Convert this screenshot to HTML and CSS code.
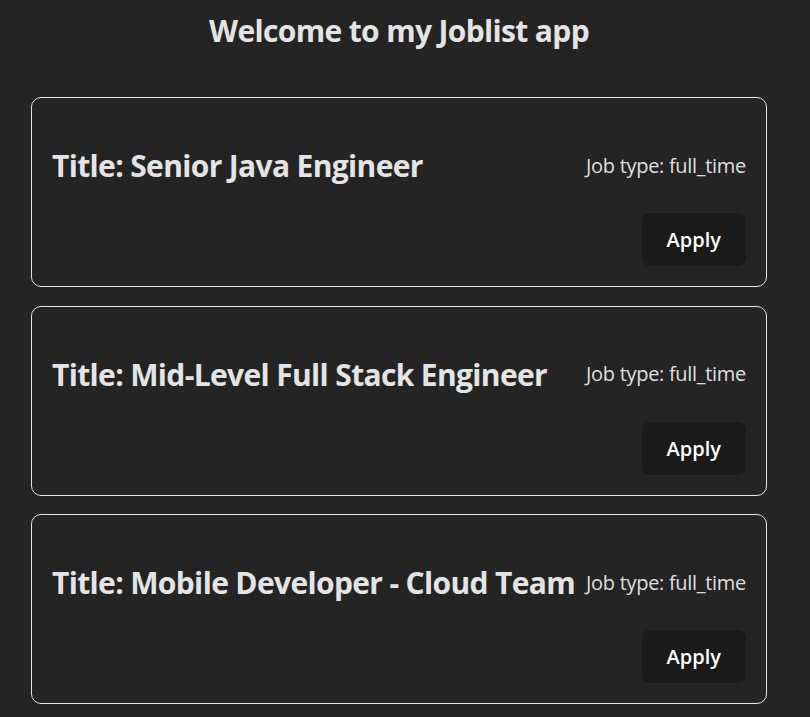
FILE: index.html
```html
<!DOCTYPE html>
<html lang="en">
<head>
<meta charset="utf-8">
<title>Joblist</title>
<link rel="stylesheet" href="styles.css">
</head>
<body>
<main class="app">
  <h2 class="page-title">Welcome to my Joblist app</h2>
  <div class="job-list">
    <section class="job-card">
      <div class="job-head">
        <h2 class="job-title">Title: Senior Java Engineer</h2>
        <p class="job-type">Job type: full_time</p>
      </div>
      <div class="job-actions"><button class="apply-btn">Apply</button></div>
    </section>
    <section class="job-card">
      <div class="job-head">
        <h2 class="job-title">Title: Mid-Level Full Stack Engineer</h2>
        <p class="job-type">Job type: full_time</p>
      </div>
      <div class="job-actions"><button class="apply-btn">Apply</button></div>
    </section>
    <section class="job-card">
      <div class="job-head">
        <h2 class="job-title">Title: Mobile Developer - Cloud Team</h2>
        <p class="job-type">Job type: full_time</p>
      </div>
      <div class="job-actions"><button class="apply-btn">Apply</button></div>
    </section>
  </div>
</main>
</body>
</html>
```
FILE: styles.css
```css
html, body {
  margin: 0;
  padding: 0;
  background: #242424;
}
body {
  font-family: "Open Sans", "Noto Sans", sans-serif;
  font-size: 20px;
  line-height: 1.5;
  color: rgba(255, 255, 255, 0.87);
}
.app {
  width: 736px;
  margin-left: 31px;
  padding-top: 8px;
}
.page-title {
  margin: 0 0 44px;
  text-align: center;
  font-size: 30px;
  font-weight: 700;
  line-height: 45px;
  letter-spacing: -0.65px;
  color: #e4e4e4;
}
.job-list {
  display: flex;
  flex-direction: column;
  gap: 18.5px;
}
.job-card {
  border: 1px solid #e2e2e2;
  border-radius: 10px;
  padding: 20px;
}
.job-head {
  display: flex;
  justify-content: space-between;
  align-items: center;
  gap: 10px;
}
.job-title {
  margin: 25px 0;
  font-size: 30px;
  font-weight: 700;
  line-height: 45px;
  letter-spacing: -0.65px;
  white-space: nowrap;
  color: #e4e4e4;
}
.job-type {
  margin: 0;
  font-size: 20px;
  letter-spacing: -0.3px;
  white-space: nowrap;
}
.job-actions {
  display: flex;
  justify-content: flex-end;
}
.apply-btn {
  font-family: inherit;
  font-size: 20px;
  font-weight: 600;
  line-height: 27px;
  padding: 12px 24px;
  border: 1px solid transparent;
  border-radius: 8px;
  background: #1a1a1a;
  color: #ffffff;
  cursor: pointer;
}
```
